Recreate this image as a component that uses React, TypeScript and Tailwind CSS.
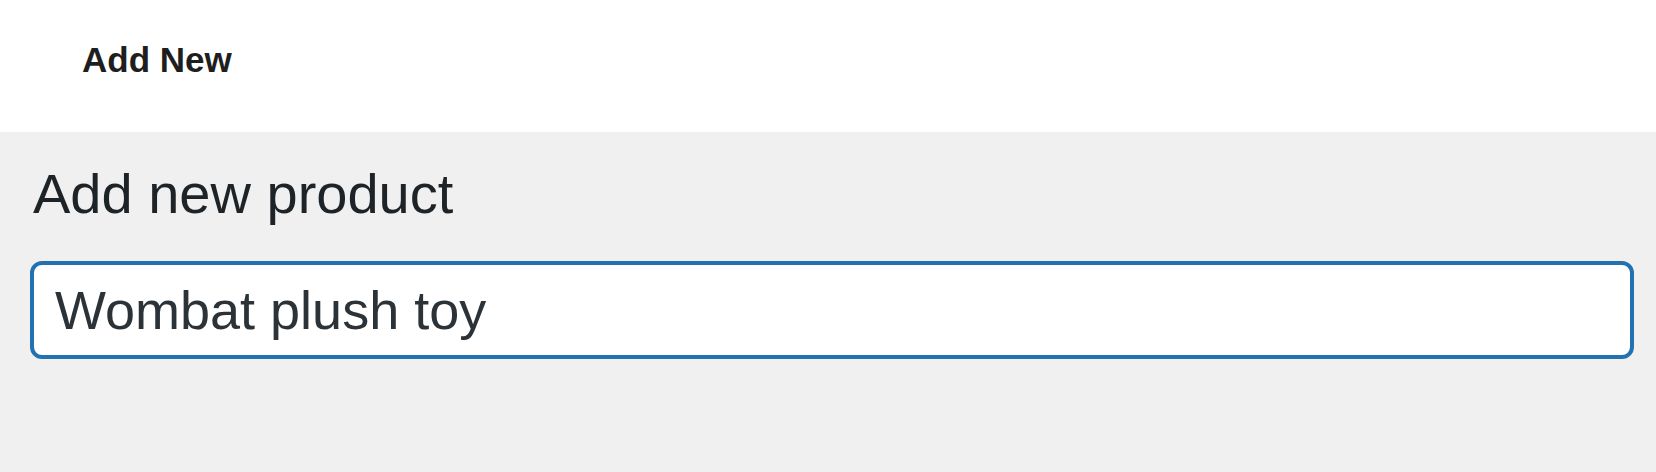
export default function App() {
  return (
    <div className="w-full h-screen flex flex-col bg-[#f0f0f0] font-['Liberation_Sans',Arial,sans-serif]">
      <div className="h-[132px] bg-white shrink-0 pl-[82px] pt-[42px]">
        <div className="text-[35px] leading-none font-bold text-[#1e1e1e]">Add New</div>
      </div>
      <div className="flex flex-col pl-[30px] pr-[22px]">
        <h1 className="mt-[34px] ml-[3px] text-[56px] leading-none font-normal text-[#1d2327]">Add new product</h1>
        <input
          className="mt-[39px] h-[98px] w-full bg-white border-[4px] border-[#2271b1] rounded-[12px] pl-[21px] text-[54px] text-[#2c3338] outline-none font-['Liberation_Sans',Arial,sans-serif]"
          defaultValue="Wombat plush toy"
        />
      </div>
    </div>
  )
}
